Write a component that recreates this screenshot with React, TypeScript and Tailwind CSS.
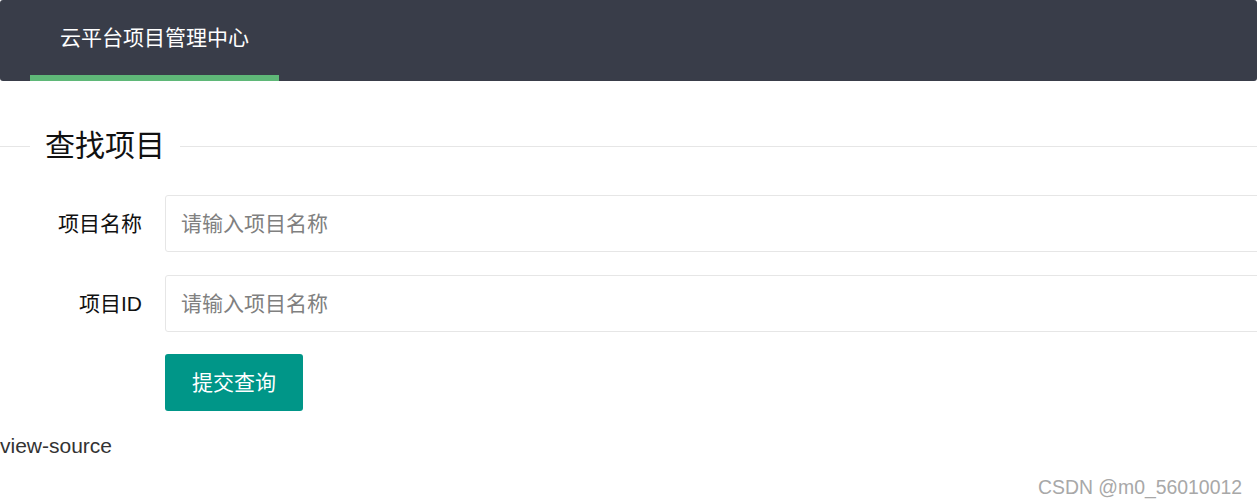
import React from "react";

const font = { fontFamily: '"Liberation Sans", "Noto Sans CJK SC", sans-serif' };

function FormRow({ label }: { label: string }) {
  return (
    <div className="flex items-center overflow-hidden">
      <label className="w-[165px] shrink-0 pr-[23px] text-right text-[21px] leading-[57px] text-[#111]">
        {label}
      </label>
      <input
        className="h-[57px] w-[1100px] shrink-0 rounded-[3px] border border-[#e6e6e6] bg-white pl-[15px] text-[21px] text-[#333] outline-none placeholder:text-[#808080]"
        placeholder="请输入项目名称"
      />
    </div>
  );
}

export default function App() {
  return (
    <div className="relative h-[504px] w-[1257px] overflow-hidden bg-white" style={font}>
      <div className="h-[81px] rounded-[3px] bg-[#393D49] pl-[30px]">
        <div className="flex h-full w-[249px] flex-col">
          <div className="flex h-[75px] items-center pl-[30px] text-[21px] text-white">
            云平台项目管理中心
          </div>
          <div className="h-[6px] bg-[#5FB878]" />
        </div>
      </div>

      <div className="mt-[44px] flex h-[42px] items-center">
        <div className="h-px w-[30px] bg-[#e6e6e6]" />
        <div className="px-[15px] text-[30px] leading-[42px] text-[#111]">查找项目</div>
        <div className="h-px flex-1 bg-[#e6e6e6]" />
      </div>

      <div className="mt-[28px] flex flex-col">
        <FormRow label="项目名称" />
        <div className="mt-[23px]">
          <FormRow label="项目ID" />
        </div>
        <div className="mt-[22px] pl-[165px]">
          <button className="h-[57px] w-[138px] rounded-[3px] bg-[#009688] text-[21px] text-white">
            提交查询
          </button>
        </div>
      </div>

      <div className="mt-[23px] text-[21px] leading-[24px] text-[#333]">view-source</div>

      <div className="absolute bottom-[6px] right-[15px] text-[19.4px] leading-[22px] text-[#a8a8a8]">
        CSDN @m0_56010012
      </div>
    </div>
  );
}
